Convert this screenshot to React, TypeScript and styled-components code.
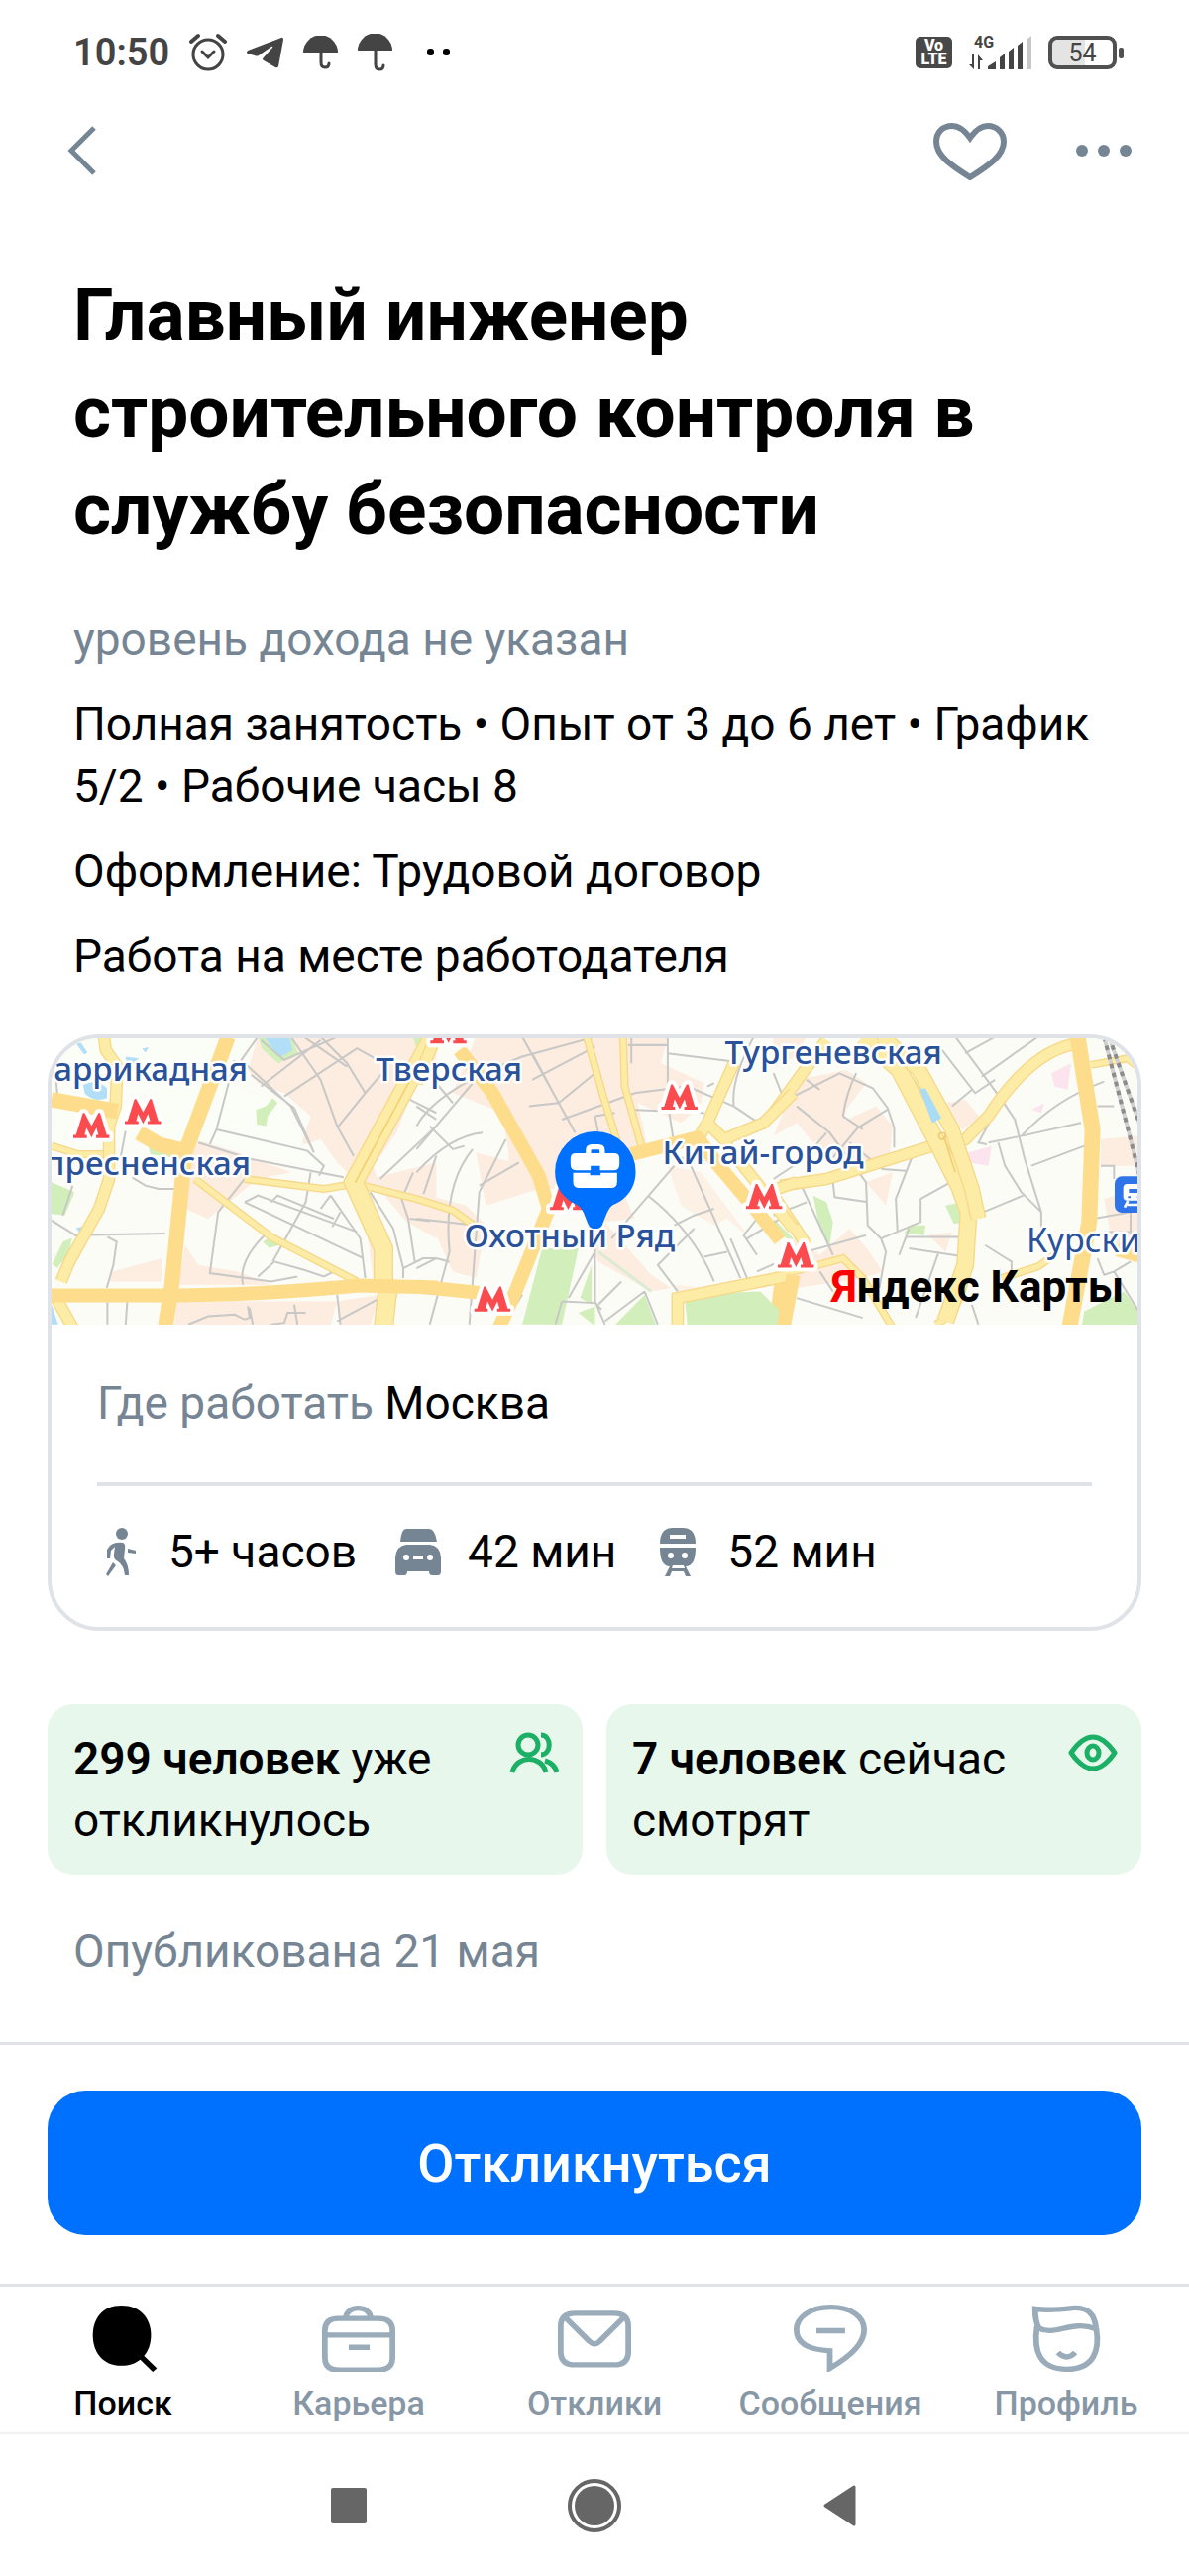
import { useState } from "react";
import type { ReactNode } from "react";
import styled, { createGlobalStyle } from "styled-components";

const GlobalStyle = createGlobalStyle`
    *{box-sizing: border-box;}
    body{margin: 0; background: #fff; color: #000; font-family: Roboto, "Liberation Sans", sans-serif;}
    h1, p{margin: 0;}
    button{font-family: inherit; border: 0; background: none; padding: 0; cursor: pointer;}
    svg{display: block; flex: none;}
`;

const Page = styled.div`
    display: flex;
    flex-direction: column;
    min-height: 100vh;
`;

const StatusBar = styled.div`
    display: flex;
    align-items: center;
    justify-content: space-between;
    height: 106px;
    padding: 0 66px 0 74px;
    color: #444;
`;
const StatusGroup = styled.div<{ $gap: number }>`
    display: flex;
    align-items: center;
    gap: ${({ $gap }) => $gap}px;
`;
const Clock = styled.time`
    font-size: 38px;
    line-height: 44px;
    font-weight: 600;
`;
const Volte = styled.div`
    display: flex;
    flex-direction: column;
    align-items: center;
    justify-content: center;
    width: 37px;
    height: 32px;
    border-radius: 5px;
    background: #484848;
    color: #fff;
    font-size: 16px;
    line-height: 14px;
    font-weight: 900;
`;
const Battery = styled.div`
    display: flex;
    align-items: center;
    gap: 2px;
    &::after{content: ""; width: 5px; height: 11px; border-radius: 2px; background: #505050;}
`;
const BatteryBody = styled.div`
    width: 69px;
    height: 34px;
    border: 4px solid #505050;
    border-radius: 9px;
    background: linear-gradient(to right, #e4e4e4 54%, #fff 54%);
    font-size: 25px;
    line-height: 27px;
    text-align: center;
`;

const Header = styled.header`
    display: flex;
    align-items: center;
    justify-content: space-between;
    height: 92px;
    padding: 0 57px 0 60px;
    color: #768594;
`;
const HeaderActions = styled.div`
    display: flex;
    align-items: center;
    gap: 68px;
`;
const IconButton = styled.button`color: inherit;`;

const Main = styled.main`
    flex: 1;
    padding: 71px 48px 56px;
    font-size: 46px;
    line-height: 62px;
`;
const Summary = styled.section`
    display: flex;
    flex-direction: column;
    gap: 24px;
    padding: 0 26px;
`;
const Title = styled.h1`
    margin-bottom: 27px;
    font-size: 73px;
    line-height: 98px;
    font-weight: 700;
`;
const Text = styled.p<{ $muted?: boolean }>`
    color: ${({ $muted }) => ($muted ? "#768594" : "#000")};
`;

const PlaceCard = styled.section`
    margin-top: 48px;
    border: 4px solid #dfe3e7;
    border-radius: 52px;
    overflow: hidden;
`;
const MapSvg = styled.svg`
    width: 100%;
    height: 289px;
    font-family: "Noto Sans", "Open Sans", sans-serif;
    font-size: 33px;
    font-weight: 500;
    & .name{fill: #29529a; stroke: #fff; stroke-width: 5px; stroke-linejoin: round; paint-order: stroke;}
    & .station{font-size: 34px; font-weight: 400;}
    & .brand{font-family: Roboto, "Liberation Sans", sans-serif; font-size: 44px; font-weight: 700;}
`;
const PlaceBody = styled.div`padding: 48px 46px 45px;`;
const Where = styled.p`
    padding-bottom: 49px;
    border-bottom: 4px solid #dfe3e7;
    & span{color: #768594;}
`;
const Routes = styled.ul`
    display: flex;
    gap: 36px;
    margin: 0;
    padding: 35px 0 0;
    list-style: none;
    & li{display: flex; align-items: center; gap: 24px;}
    & svg{color: #768594;}
`;

const Stats = styled.section`
    display: grid;
    grid-template-columns: 1fr 1fr;
    gap: 24px;
    margin-top: 74px;
`;
const Stat = styled.div`
    display: flex;
    align-items: flex-start;
    justify-content: space-between;
    padding: 24px 24px 24px 26px;
    border-radius: 26px;
    background: #e7f7eb;
    & b{font-weight: 600;}
`;
const Published = styled.p`
    margin-top: 46px;
    padding: 0 26px;
    color: #768594;
`;

const ApplyBar = styled.div`
    padding: 46px 48px 49px;
    border-top: 3px solid #dfe3e7;
`;
const ApplyButton = styled.button`
    width: 100%;
    height: 146px;
    border-radius: 38px;
    background: #0070ff;
    color: #fff;
    font-size: 54px;
    font-weight: 500;
`;

const TabBar = styled.nav`
    display: flex;
    padding: 18px 5px 10px;
    border-top: 3px solid #dfe3e7;
    border-bottom: 2px solid #f0f1f2;
`;
const Tab = styled.button<{ $on: boolean }>`
    flex: 1 1 0;
    display: flex;
    flex-direction: column;
    align-items: center;
    gap: 11px;
    color: ${({ $on }) => ($on ? "#000" : "#8797a5")};
    font-size: 34px;
    line-height: 40px;
    font-weight: 500;
    & svg{color: ${({ $on }) => ($on ? "#000" : "#9aabba")};}
`;

const SystemBar = styled.div`
    display: flex;
    align-items: center;
    justify-content: center;
    gap: 202px;
    height: 143px;
    color: #666;
`;

const roadGrey = { fill: "none", stroke: "#c8c8c6", strokeWidth: 6 };
const roadLight = { fill: "none", stroke: "#fdeca6" };
const roadLightEdge = { fill: "none", stroke: "#f6d888" };
const roadMain = { fill: "none", stroke: "#fddd8c", strokeLinejoin: "round" as const };

function Road({ d, width }: { d: string; width: number }) {
    return (
        <>
            <path d={d} {...roadLightEdge} strokeWidth={width} />
            <path d={d} {...roadLight} strokeWidth={width - 8} />
        </>
    );
}

function Metro({ x, y }: { x: number; y: number }) {
    return (
        <path
            transform={`translate(${x} ${y})`}
            d="M0 76v-9h8L29 0h5l21 40L76 0h5l20 67h8v9H69v-9h7l-6-22-15 30-15-30-6 22h7v9z"
            fill="#fb4b4e"
            stroke="#fff"
            strokeWidth="24"
            strokeLinejoin="round"
            paintOrder="stroke"
        />
    );
}

function WestDistrict() {
    return (
        <g transform="translate(-36 -54)">
            <g fill="#fdece0">
                <path d="M660 50h540v90l-60 40-60 160-70 100 20 70-70-20-60-60-50-70-60 20 30-90-80-70-80-30-30-40z" />
                <path d="M470 360l130 40 160 60-100 20-150 120-70-30zM220 760l150-40v70H210zM440 680l40 60 120 20 100 40H420zM410 850h490l-20 74H410zM900 850l130-20-30 94h-90zM1000 480l200-50v230l-90-50zM990 640l60 100-40 50z" />
            </g>
            <path d="M40 50h600L570 200l150 40 90 150 40 60-330-80-170-10-300 30z" fill="#fbfdf8" opacity=".5" />
            <g fill="#d2efbb">
                <path d="M662 50h100l20 50-60 30-50-45zM655 270l30-10 20-25 15 15-30 40-5 30-28-5zM330 385l60 5 10 25-65-10zM36 490l70 30-30 70-40-5zM70 670l28-12-10 50-35 40-15-10zM675 670l20-15 30 25-30 8zM1130 50h50l-30 70z" />
            </g>
            <g fill="#b3def8">
                <path d="M680 50h75l10 40-40 22zM110 70l15-2 20 30-10 5zM132 195q40-20 72 10v30q-40 15-68-15zM260 110l40 5-35 30zM310 85l20-3-10 16zM36 860l20 60H36zM110 628l20-5-8 20z" />
            </g>
            <g {...roadGrey}>
                <path d="M50 180l5 60M590 120L535 330 515 375M535 330L810 395 860 440 845 470M660 50L610 120 760 260 830 400M670 60l70 60 160-70M670 200L850 60M740 230L960 85 1040 130M850 50l80 80 55 90M760 50L850 180 900 320 950 410M930 140L770 30M985 220L900 325M985 220l60-70M1200 320L1030 480M480 370L640 420 920 475M640 165L770 265 830 400M260 335l-15 80M280 475l40 25 40 10h55M100 500L70 590M36 605l80 50M110 650L380 645M205 655l28 15-10 70-20 70M205 850v70M265 850l-5 74M620 480L540 580 515 765 700 790 780 775" />
                <path d="M620 550l40-20 300 110M620 550L980 720M700 550l20-20 170 70M820 460l-15 90-100 180M880 530l90 130 15 120M880 530l-30 40M910 580l-25 45M680 650Q600 730 615 800M710 730l90 25 60 20 40-20M660 775l50-45M1000 520l70 110 30 120M1130 460l-35 80 20 60 20 130M1200 610l-80-10M1100 750l60-30h40M1100 750v30M1160 530l40-120M900 830l10 90M1030 840l-130 70M450 920l60-25 80-5 30 15 15-5-5-35M635 870l10 50M700 920l40-5 10-30h55M770 860l10 60M1120 240l80 40" />
            </g>
            <Road d="M36 380l80 25h100M620 480l240 30 90-15M940 490l260 65M470 480L700 655 960 790" width={24} />
            <Road d="M195 50l5 40 35 50-5 120-20 60v160l-30 90-90 160-25 60M50 840l50 90" width={38} />
            <Road d="M1190 50L950 490 1040 690v110M1060 790l-10 50-10 90" width={60} />
            <path d="M1180 70L955 490" stroke="#f3d071" strokeWidth="5" />
            <path d="M570 50L440 400 400 800 380 930M36 240l200 35M300 340l60 35 80 20" {...roadMain} strokeWidth="46" />
            <path d="M36 832h370q250 0 560-30l240 6" {...roadMain} strokeWidth="42" />
        </g>
    );
}

function CentralDistrict() {
    return (
        <g transform="translate(1104 -54)">
            <g fill="#fdece0">
                <path d="M180 50h580l-20 80 130 60-10 70-60 50-130-60 30 140-110 50 70 160-90 10 140 160 60 40-60 10-160-90-60-200-200-50-30-200-150-60zM0 520l150 40 60 60-30 160-70-20zM180 400l150 40 40 70-160 50zM270 300l60 150-50-20z" />
                <path d="M760 440l100 20 150 200-70-60-40 20-100-60zM780 800l200 20-180 30z" opacity=".7" />
            </g>
            <g fill="#d2efbb">
                <path d="M380 690h110l-50 230H320zM530 740v120l-35-20zM490 885l50-20v60zM690 830l35 92H600zM810 830l230-10 60 60v44H820zM1070 600l50 40-10 20z" />
            </g>
            <g {...roadGrey}>
                <path d="M0 320Q60 210 320 110L540 50M0 260l60 40M60 190l50 60M320 50L480 340M350 100l80 150 110-90M350 180L540 80M430 250l-90 10M440 300l220-80 160-20 140 60M650 50v80M760 50v200l20 130M760 100l200 25M640 75h120M650 270l220 10M540 290l60-10M540 290l10 50M0 390L170 190M40 320l70 70 35-10M0 600l180 20M0 460Q100 350 200 340M170 390Q80 500 100 700L40 920M0 750l60-30 40 10M160 920l30-400 80-160M190 500l120-70" />
                <path d="M780 440L590 660M700 530q140 110 200 260M830 440l150 340M780 620l60-30 60-20M870 715l70-15M1000 660l100-60M1000 780L950 660M1030 600l-40 50 40 60M1030 760l90-40M840 630L730 740l60 80M540 690v160l30 70M540 700L460 840M440 850l100 5 20 20M620 790l-70 70M690 820L570 910M690 820l40 100M440 850l-20 70M320 830l-50 80M380 680l80-50M880 200l20-10M960 260q-10-80 60-210M960 260l90 60M800 420l60-30" />
            </g>
            <path d="M550 700l160 120" stroke="#dcebd2" strokeWidth="9" />
            <Road d="M515 50l50 180 55 180M625 50l5 150 50 180M0 540l110 35 70 50" width={24} />
            <Road d="M960 130L880 310 850 360M1140 220l-90 90-120 50-60-60M930 370l90 110 120 150M1090 510l60-20M0 190L50 70" width={38} />
            <Road d="M790 930v-90l150-30 200-40" width={38} />
            <path d="M130 90L230 220 370 470 400 570 300 820 250 930M0 805l200 20M650 405l200-50 60 80 110 130 80 100M1140 770l-30 160" {...roadMain} strokeWidth="42" />
        </g>
    );
}

function EastDistrict() {
    return (
        <g transform="translate(2184 -54)">
            <g fill="#fdece0">
                <path d="M0 50h100l-30 60-70 30zM70 180l150-30 60 40-60 80-10 60-90 40-50-60-70 40zM120 380l60-60 130-60 50 60-10 110-80 20zM280 490l80-30-20 100zM520 250l60-10 50 60-60 30zM300 50l60-5-20 50zM60 650l80 60 90-80 60 70 40 60-60 20-200 30zM470 650l70-10-20 60zM990 360l110-10v90h-110zM1000 540l110-30v220l-80-20z" />
            </g>
            <g fill="#fbe4ee">
                <path d="M840 160l60-30-10 80-40-10zM780 270l40-20-10 30zM590 400l70-20-10 60-60-10z" />
            </g>
            <g fill="#d2efbb">
                <path d="M120 530l40 20 20 60-10 70-30-50zM410 620h50l-5 30-60-5zM520 560l50-10 20 60-45 5zM385 130l60 70 20 60-40-70zM940 880l120-60 45 60v60H930zM0 600l60 60-10 10-50-50z" />
            </g>
            <g {...roadGrey}>
                <path d="M550 50l140 190-70 130 25 5M510 90l100 130 60-40M580 100l90-50M630 170l170-120M690 240l40 60 30 120 50 160v50M750 350l180-40M650 370l100-20M680 370l20 70 50 80 60 60M750 350Q850 240 1000 185M780 440l160-60M635 580l120-50M600 210l-60 50M990 440h40v40M980 260h50M970 600l110-20v70M1000 640h90M980 720l20 50 30-10 75 120M1080 730l-50 30" />
                <path d="M0 260l200-100 100 45 45 60 20 60v60M345 270l-90 55-75 90M210 290q10-70 40-130M210 290l60 40M70 260l100 80 110 150 5 130 40 40 120-50v-70l90-50M80 490l100 220M0 590l100-40M0 480l90-60 70-80M180 490l5 45 100 15M420 410l-50 130 5 100M325 660l15 40-20 110M100 700l180-50M400 655h170M410 690l170 25M500 700l-70 200M70 840l200 60M410 630l-30 80M640 680l80 50v40M600 860l20 60M230 370l100 80 70 5M140 760l40 60M0 160l40 100M100 180l40 30" />
            </g>
            <Road d="M960 135l110-20 50 40M690 780l110-35 50-35M0 800l60-40 150-40 60 60 90 150M490 920q70-30 90-140" width={24} />
            <Road d="M0 280L160 60M20 500l140-20 320-100 100-20 70-70Q780 90 920 70M0 530l100 150" width={38} />
            <Road d="M270 50l110 100 110 210 70 140 30 80-10 160-60 170" width={54} />
            <Road d="M330 50l110 100 100 180 60 180 20 90" width={48} />
            <path d="M442 208l18-2 48 90-28 15z" fill="#aaddf5" />
            <path d="M515 350l35 110" stroke="#efd073" strokeWidth="5" />
            <circle cx="510" cy="350" r="10" fill="none" stroke="#eaca70" strokeWidth="5" />
            <path d="M920 50l45 280-10 280-60 320M30 760L10 930M1040 690l70 20" {...roadMain} strokeWidth="48" />
            <g fill="none" strokeWidth="12">
                <path d="M1000 50l75 290 40 160M1015 50l95 270" stroke="#d0d0d0" />
                <path d="M1000 50l75 290 40 160M1015 50l95 270" stroke="#8c8c8c" strokeDasharray="14 14" />
            </g>
            <rect x="1032" y="472" width="110" height="110" rx="22" fill="#2f74e8" />
            <path d="M1070 495h60v50h-60q-12 0-12-12v-26q0-12 12-12z" fill="#fff" />
            <path d="M1075 510h40v12h-40zM1072 532h8v6h-8zM1100 532h8v6h-8z" fill="#2f74e8" />
            <path d="M1072 546l-10 20M1070 558h40" stroke="#fff" strokeWidth="8" />
        </g>
    );
}

function CityMap() {
    return (
        <MapSvg viewBox="0 0 1095 289" preserveAspectRatio="xMidYMid slice" role="img" aria-label="Карта">
            <rect width="1095" height="289" fill="#fbfcf6" />
            <svg width="1095" height="289" viewBox="0 0 3285 867">
                <WestDistrict />
                <EastDistrict />
                <CentralDistrict />
                <Metro x={66} y={226} />
                <Metro x={222} y={184} />
                <Metro x={1146} y={-60} />
                <Metro x={1845} y={140} />
                <Metro x={1508} y={444} />
                <Metro x={2101} y={441} />
                <Metro x={2197} y={618} />
                <Metro x={1279} y={751} />
            </svg>
            <text className="name" x="198" y="43" textAnchor="end">Баррикадная</text>
            <text className="name" x="201" y="138" textAnchor="end">пресненская</text>
            <text className="name" x="327" y="43">Тверская</text>
            <text className="name" x="679" y="26">Тургеневская</text>
            <text className="name" x="616" y="127">Китай-город</text>
            <text className="name" x="416" y="211">Охотный Ряд</text>
            <text className="name station" x="983" y="216">Курски</text>
            <text className="brand" x="786" y="266"><tspan fill="#f00">Я</tspan>ндекс Карты</text>
            <svg x="507" y="93" width="83" height="100" viewBox="417 333 249 300">
                <path d="M419 458a122 122 0 0 1 244 0c0 48-28 84-68 100-17 10-22 38-34 62q-5 10-20 10t-20-10c-12-26-17-52-36-62-42-20-66-52-66-100z" fill="#0070ff" />
                <path d="M520 402v-8q0-11 11-11h20q11 0 11 11v8" fill="none" stroke="#fff" strokeWidth="16" />
                <path d="M482 402h116q16 0 16 16v17q0 19-18 19h-41v-14h-28v14h-43q-18 0-18-19v-17q0-16 16-16zM474 461h51v8h32v-8h50v28q0 18-18 18h-97q-18 0-18-18z" fill="#fff" />
            </svg>
        </MapSvg>
    );
}

const tabs: { id: string; label: string; icon: ReactNode }[] = [
    {
        id: "search",
        label: "Поиск",
        icon: (
            <>
                <path d="M38 1c20 0 31 15 31 34S58 70 38 70 8 54 8 35 18 1 38 1z" fill="currentColor" stroke="none" />
                <path d="M57 58l16 17" stroke="currentColor" strokeWidth="6" />
            </>
        ),
    },
    {
        id: "career",
        label: "Карьера",
        icon: <path d="M26 16c0-16 26-16 26 0M18 16h42q15 0 15 14v31q0 14-15 14H18Q4 75 4 61V30q0-14 14-14zM4 35h71M29 49h22" />,
    },
    {
        id: "replies",
        label: "Отклики",
        icon: <path d="M19 10h41q15 0 15 15v29q0 15-15 15H19Q4 69 4 54V25q0-15 15-15zM9 15l25 27q6 6 11 0l25-27" />,
    },
    {
        id: "messages",
        label: "Сообщения",
        icon: <path d="M40 3C18 3 4 15 4 29c0 16 14 23 35 24v20C63 58 75 44 75 29 75 14 61 3 40 3zM25 30h30" />,
    },
    {
        id: "profile",
        label: "Профиль",
        icon: <path d="M9 25c-4 29 3 49 31 49 29 0 35-22 31-47C69 12 64 3 46 4 31 6 20 7 7 5c0 9 1 16 4 22 17 10 34-10 60 1M31 55q9 10 18 0" />,
    },
];

export default function App() {
    const [tab, setTab] = useState("search");
    const [liked, setLiked] = useState(false);

    return (
        <Page>
            <GlobalStyle />
            <StatusBar>
                <StatusGroup $gap={20}>
                    <Clock>10:50</Clock>
                    <svg width="38" height="40" viewBox="0 0 38 40" fill="none" stroke="currentColor" strokeWidth="3" strokeLinecap="round">
                        <circle cx="19" cy="22" r="15" />
                        <path d="M2 9l7-6M36 9l-7-6" strokeWidth="4" />
                        <path d="M13 19l6 6 6-6" />
                    </svg>
                    <svg width="37" height="32" viewBox="0 0 37 32" fill="currentColor">
                        <path d="M35 1q2-1 2 2l-5 27q-1 2-3 1L17 24q-2-1 0-3l9-10q1-2-1-1L12 19q-2 1-4 0l-7-2q-2-1 0-3z" />
                    </svg>
                    {[34, 38].map((height) => (
                        <svg key={height} width="35" height={height} viewBox={`0 0 35 ${height}`}>
                            <path d="M0 17a17 17 0 0 1 35 0z" fill="currentColor" />
                            <path d={`M18 16v${height - 23}q0 5 4 5t4-4`} fill="none" stroke="currentColor" strokeWidth="3" strokeLinecap="round" />
                        </svg>
                    ))}
                    <svg width="38" height="8" viewBox="0 0 38 8" fill="#000">
                        <rect x="15" width="7" height="7" rx="3" />
                        <rect x="31" width="7" height="7" rx="3" />
                    </svg>
                </StatusGroup>
                <StatusGroup $gap={17}>
                    <Volte><span>Vo</span><span>LTE</span></Volte>
                    <svg width="63" height="44" viewBox="0 -4 63 44" fill="currentColor">
                        <text x="5" y="13" fontSize="16" fontWeight="700">4G</text>
                        <path d="M3 20h2v15L0 30h3zM9 35h2V26h3L9 20z" />
                        <path d="M19 35v-3l8-5v8zM31 35V23l5-4v16zM40 35V17l5-4v22zM49 35V11l5-4v28z" />
                        <path d="M58 35V5l5-4v34z" fill="#c8c8c8" />
                    </svg>
                    <Battery><BatteryBody>54</BatteryBody></Battery>
                </StatusGroup>
            </StatusBar>

            <Header>
                <IconButton aria-label="Назад">
                    <svg width="40" height="52" viewBox="0 0 40 52" fill="none" stroke="currentColor" strokeWidth="5">
                        <path d="M35 3L12 26l23 23" />
                    </svg>
                </IconButton>
                <HeaderActions>
                    <IconButton aria-label="В избранное" aria-pressed={liked} onClick={() => setLiked(!liked)}>
                        <svg width="76" height="60" viewBox="0 0 76 60" fill={liked ? "currentColor" : "none"} stroke="currentColor" strokeWidth="6">
                            <path d="M38 17C33 10 27 5 20 5 10 5 4 12 4 21c0 14 15 24 34 36 19-12 34-22 34-36C72 12 65 5 56 5 49 5 43 10 38 17z" />
                        </svg>
                    </IconButton>
                    <IconButton aria-label="Ещё">
                        <svg width="58" height="14" viewBox="0 0 58 14" fill="currentColor">
                            <circle cx="7" cy="7" r="6" />
                            <circle cx="29" cy="7" r="6" />
                            <circle cx="51" cy="7" r="6" />
                        </svg>
                    </IconButton>
                </HeaderActions>
            </Header>

            <Main>
                <Summary>
                    <Title>Главный инженер строительного контроля в службу безопасности</Title>
                    <Text $muted>уровень дохода не указан</Text>
                    <Text>Полная занятость • Опыт от 3 до 6 лет • График 5/2 • Рабочие часы 8</Text>
                    <Text>Оформление: Трудовой договор</Text>
                    <Text>Работа на месте работодателя</Text>
                </Summary>

                <PlaceCard>
                    <CityMap />
                    <PlaceBody>
                        <Where><span>Где работать</span> Москва</Where>
                        <Routes>
                            <li>
                                <svg width="48" height="52" viewBox="0 0 48 52" fill="currentColor">
                                    <ellipse cx="25" cy="8" rx="6" ry="6" />
                                    <path d="M13 20q5-4 13-3 3 1 2 7l-1 9q5 6 5 17h-4q-1-10-7-14-5-2-4-8l1-7-4 4-1 8h-3V24zM31 23l8 2v3l-8-1zM16 37l3 3-8 11-2-2z" />
                                </svg>
                                5+ часов
                            </li>
                            <li>
                                <svg width="52" height="52" viewBox="0 0 52 52">
                                    <path d="M14 3h23q6 0 8 13H8q1-13 6-13zM14 19h24q10 1 11 13v14q0 4-3 4h-6q-3 0-3-4H15q0 4-3 4H6q-3 0-3-4V32q1-12 11-13z" fill="currentColor" />
                                    <g fill="#fff">
                                        <circle cx="14" cy="32" r="3" />
                                        <circle cx="38" cy="32" r="3" />
                                        <path d="M21 30h10v4H21z" />
                                    </g>
                                </svg>
                                42 мин
                            </li>
                            <li>
                                <svg width="52" height="52" viewBox="0 0 52 52">
                                    <path d="M8 18q0-16 13-16h10q13 0 13 16zM8 22h36q0 19-10 19l5 10h-5l-2-5H20l-2 5h-5l5-10Q8 41 8 22z" fill="currentColor" />
                                    <g fill="#fff">
                                        <path d="M18 9h16v4H18zM21 40h11l1 3H20z" />
                                        <circle cx="19" cy="30" r="3" />
                                        <circle cx="33" cy="30" r="3" />
                                    </g>
                                </svg>
                                52 мин
                            </li>
                        </Routes>
                    </PlaceBody>
                </PlaceCard>

                <Stats>
                    <Stat>
                        <p><b>299 человек</b> уже откликнулось</p>
                        <svg width="50" height="50" viewBox="0 0 50 50" fill="none" stroke="#1bb066" strokeWidth="5">
                            <rect x="9" y="7" width="20" height="20" rx="10" />
                            <path d="M32 7c11 0 11 20 0 20M3 45c4-18 30-18 34 0M36 33q10 3 12 12" />
                        </svg>
                    </Stat>
                    <Stat>
                        <p><b>7 человек</b> сейчас смотрят</p>
                        <svg width="50" height="46" viewBox="0 0 50 46" fill="none" stroke="#1bb066" strokeWidth="5">
                            <path d="M3 25q22-32 44 0-22 32-44 0z" strokeLinejoin="round" />
                            <ellipse cx="25" cy="25" rx="6" ry="7" />
                        </svg>
                    </Stat>
                </Stats>
                <Published>Опубликована 21 мая</Published>
            </Main>

            <ApplyBar>
                <ApplyButton>Откликнуться</ApplyButton>
            </ApplyBar>

            <TabBar>
                {tabs.map(({ id, label, icon }) => (
                    <Tab key={id} $on={tab === id} onClick={() => setTab(id)}>
                        <svg width="76" height="68" viewBox="0 0 79 77" preserveAspectRatio="none" fill="none" stroke="currentColor" strokeWidth="6">
                            {icon}
                        </svg>
                        {label}
                    </Tab>
                ))}
            </TabBar>

            <SystemBar>
                <IconButton aria-label="Недавние">
                    <svg width="36" height="36"><rect width="36" height="36" rx="2" fill="currentColor" /></svg>
                </IconButton>
                <IconButton aria-label="Домой">
                    <svg width="56" height="56" viewBox="0 0 56 56" fill="none" stroke="currentColor" strokeWidth="4">
                        <circle cx="28" cy="28" r="25" />
                        <circle cx="28" cy="28" r="20" fill="currentColor" stroke="none" />
                    </svg>
                </IconButton>
                <IconButton aria-label="Назад">
                    <svg width="36" height="42" viewBox="0 0 36 42"><path d="M32 2v38L3 21z" fill="currentColor" stroke="currentColor" strokeWidth="3" strokeLinejoin="round" /></svg>
                </IconButton>
            </SystemBar>
        </Page>
    );
}
